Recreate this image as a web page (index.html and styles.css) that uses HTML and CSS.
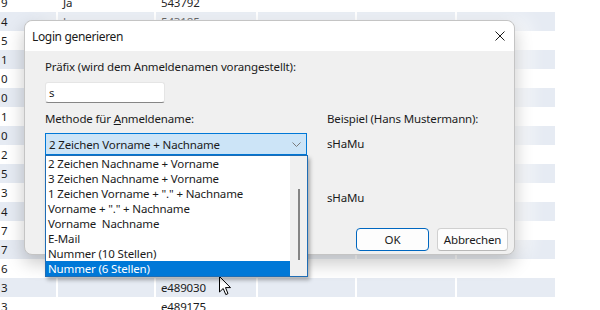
FILE: index.html
```html
<!DOCTYPE html>
<html lang="de">
<head>
    <meta charset="UTF-8">
    <title>Login generieren</title>
    <link rel="stylesheet" href="styles.css">
</head>
<body>
    <div class="sheet">
        <div class="row"><div class="cell num">9</div><div class="cell">Ja</div><div class="cell">543792</div><div class="cell"></div><div class="cell"></div><div class="cell"></div></div>
        <div class="row alt"><div class="cell num">4</div><div class="cell">Ja</div><div class="cell">543185</div><div class="cell"></div><div class="cell"></div><div class="cell"></div></div>
        <div class="row"><div class="cell num">5</div><div class="cell"></div><div class="cell"></div><div class="cell"></div><div class="cell"></div><div class="cell"></div></div>
        <div class="row alt"><div class="cell num">1</div><div class="cell"></div><div class="cell"></div><div class="cell"></div><div class="cell"></div><div class="cell"></div></div>
        <div class="row"><div class="cell num">0</div><div class="cell"></div><div class="cell"></div><div class="cell"></div><div class="cell"></div><div class="cell"></div></div>
        <div class="row alt"><div class="cell num">0</div><div class="cell"></div><div class="cell"></div><div class="cell"></div><div class="cell"></div><div class="cell"></div></div>
        <div class="row"><div class="cell num">1</div><div class="cell"></div><div class="cell"></div><div class="cell"></div><div class="cell"></div><div class="cell"></div></div>
        <div class="row alt"><div class="cell num">0</div><div class="cell"></div><div class="cell"></div><div class="cell"></div><div class="cell"></div><div class="cell"></div></div>
        <div class="row"><div class="cell num">2</div><div class="cell"></div><div class="cell"></div><div class="cell"></div><div class="cell"></div><div class="cell"></div></div>
        <div class="row alt"><div class="cell num">5</div><div class="cell"></div><div class="cell"></div><div class="cell"></div><div class="cell"></div><div class="cell"></div></div>
        <div class="row"><div class="cell num">3</div><div class="cell"></div><div class="cell"></div><div class="cell"></div><div class="cell"></div><div class="cell"></div></div>
        <div class="row alt"><div class="cell num">4</div><div class="cell"></div><div class="cell"></div><div class="cell"></div><div class="cell"></div><div class="cell"></div></div>
        <div class="row"><div class="cell num">7</div><div class="cell"></div><div class="cell"></div><div class="cell"></div><div class="cell"></div><div class="cell"></div></div>
        <div class="row alt"><div class="cell num">7</div><div class="cell"></div><div class="cell"></div><div class="cell"></div><div class="cell"></div><div class="cell"></div></div>
        <div class="row"><div class="cell num">6</div><div class="cell"></div><div class="cell"></div><div class="cell"></div><div class="cell"></div><div class="cell"></div></div>
        <div class="row alt"><div class="cell num">3</div><div class="cell"></div><div class="cell">e489030</div><div class="cell"></div><div class="cell"></div><div class="cell"></div></div>
        <div class="row"><div class="cell num">3</div><div class="cell"></div><div class="cell">e489175</div><div class="cell"></div><div class="cell"></div><div class="cell"></div></div>
    </div>

    <div class="dialog">
        <div class="titlebar">
            <span class="title">Login generieren</span>
            <svg class="close" width="10" height="10" viewBox="0 0 10 10">
                <path d="M0.5 0.5 L9.5 9.5 M9.5 0.5 L0.5 9.5" stroke="#1a1a1a" stroke-width="1" fill="none"/>
            </svg>
        </div>
        <div class="content">
            <div class="label">Präfix (wird dem Anmeldenamen vorangestellt):</div>
            <div class="textbox">s</div>
            <div class="columns">
                <div class="col-left">
                    <div class="label">Methode für <u>A</u>nmeldename:</div>
                    <div class="combo">
                        <span>2 Zeichen Vorname + Nachname</span>
                        <svg width="9" height="5" viewBox="0 0 9 5">
                            <path d="M0.5 0.5 L4.5 4.5 L8.5 0.5" stroke="#7a7a7a" stroke-width="1" fill="none"/>
                        </svg>
                        <div class="dropdown">
                            <div class="items">
                                <div class="item">2 Zeichen Nachname + Vorname</div>
                                <div class="item">3 Zeichen Nachname + Vorname</div>
                                <div class="item">1 Zeichen Vorname + "." + Nachname</div>
                                <div class="item">Vorname + "." + Nachname</div>
                                <div class="item">Vorname&nbsp; Nachname</div>
                                <div class="item">E-Mail</div>
                                <div class="item">Nummer (10 Stellen)</div>
                                <div class="item selected">Nummer (6 Stellen)</div>
                            </div>
                            <div class="scrollbar"><div class="thumb"></div></div>
                        </div>
                    </div>
                </div>
                <div class="col-right">
                    <div class="label">Beispiel (Hans Mustermann):</div>
                    <div class="example">sHaMu</div>
                    <div class="example second">sHaMu</div>
                </div>
            </div>
            <div class="buttons">
                <button class="btn default">OK</button>
                <button class="btn">Abbrechen</button>
            </div>
        </div>
    </div>

    <svg class="cursor" width="13" height="20" viewBox="0 0 13 20">
        <path d="M0.5 0.5 L0.5 16 L4.2 12.5 L6.8 18.6 L9 17.6 L6.5 11.6 L11.5 11.6 Z" fill="#fff" stroke="#000" stroke-width="1" stroke-linejoin="round"/>
    </svg>
</body>
</html>
```

FILE: styles.css
```css
body {
    margin: 0;
    width: 600px;
    height: 310px;
    overflow: hidden;
    background-color: #ffffff;
    font-family: 'Noto Sans', sans-serif;
    font-size: 11.5px;
    letter-spacing: -0.15px;
    color: #1b1b1b;
    position: relative;
}
.sheet {
    margin-top: -7px;
    width: 555px;
}
.row {
    display: grid;
    grid-template-columns: 56px 96px 100px 97px 98px 98px;
    column-gap: 2px;
    height: 19px;
    line-height: 19px;
}
.row.alt .cell {
    background-color: #e6ebf3;
}
.cell {
    padding-left: 5px;
    white-space: nowrap;
    overflow: hidden;
}
.cell.num {
    padding-left: 1px;
}
.dialog {
    position: absolute;
    left: 24px;
    top: 20px;
    width: 491px;
    height: 235px;
    box-sizing: border-box;
    border: 1px solid #c4c4c4;
    border-radius: 8px;
    background-color: #f0f0f0;
    box-shadow: 0 8px 18px rgba(0,0,0,0.22), 14px 0 18px rgba(255,255,255,0.75);
}
.titlebar {
    height: 30px;
    background-color: #ffffff;
    border-radius: 8px 8px 0 0;
    display: flex;
    align-items: center;
    justify-content: space-between;
    padding: 0 9px 0 7px;
}
.title {
    color: #1a1a1a;
    font-size: 12px;
    letter-spacing: -0.35px;
}
.close {
    display: block;
}
.content {
    padding: 8px 6px 0 20px;
}
.label {
    line-height: 16px;
    height: 16px;
    white-space: nowrap;
}
.textbox {
    margin-top: 7px;
    width: 120px;
    height: 21px;
    box-sizing: border-box;
    background-color: #ffffff;
    border: 1px solid #e5e5e5;
    border-bottom-color: #868686;
    border-radius: 3px;
    padding-left: 3px;
    line-height: 19px;
}
.columns {
    margin-top: 8px;
    display: grid;
    grid-template-columns: 262px 1fr;
    column-gap: 20px;
}
.combo {
    position: relative;
    margin-top: 6px;
    height: 22px;
    box-sizing: border-box;
    background-color: #cce4f7;
    border: 1px solid #0078d7;
    display: flex;
    align-items: center;
    justify-content: space-between;
    padding: 0 5px 0 3px;
}
.dropdown {
    position: absolute;
    left: -1px;
    top: 21px;
    width: 263px;
    height: 122px;
    box-sizing: border-box;
    background-color: #ffffff;
    border: 1px solid #1f6db5;
    box-shadow: 2px 3px 4px rgba(0,0,0,0.3);
    display: flex;
    z-index: 2;
}
.items {
    flex: 1;
}
.item {
    height: 15px;
    line-height: 15px;
    padding-left: 2px;
    white-space: nowrap;
}
.item.selected {
    background-color: #0078d7;
    color: #ffffff;
}
.scrollbar {
    width: 17px;
    background-color: #f0f0f0;
    position: relative;
}
.thumb {
    position: absolute;
    left: 8px;
    top: 33px;
    width: 2px;
    height: 71px;
    background-color: #858585;
}
.example {
    margin-top: 6px;
    height: 22px;
    line-height: 22px;
}
.example.second {
    margin-top: 35px;
    height: 16px;
    line-height: 16px;
}
.buttons {
    margin-top: 22px;
    display: flex;
    justify-content: flex-end;
    gap: 8px;
}
.btn {
    height: 23px;
    box-sizing: border-box;
    font-family: inherit;
    font-size: 11.5px;
    letter-spacing: -0.15px;
    color: #1b1b1b;
    background-color: #fdfdfd;
    border: 1px solid #d0d0d0;
    border-bottom-color: #b8b8b8;
    border-radius: 4px;
    padding: 0;
    width: 71px;
}
.btn.default {
    width: 73px;
    border-color: #0067c0;
}
.cursor {
    position: absolute;
    left: 219px;
    top: 276px;
}
```
